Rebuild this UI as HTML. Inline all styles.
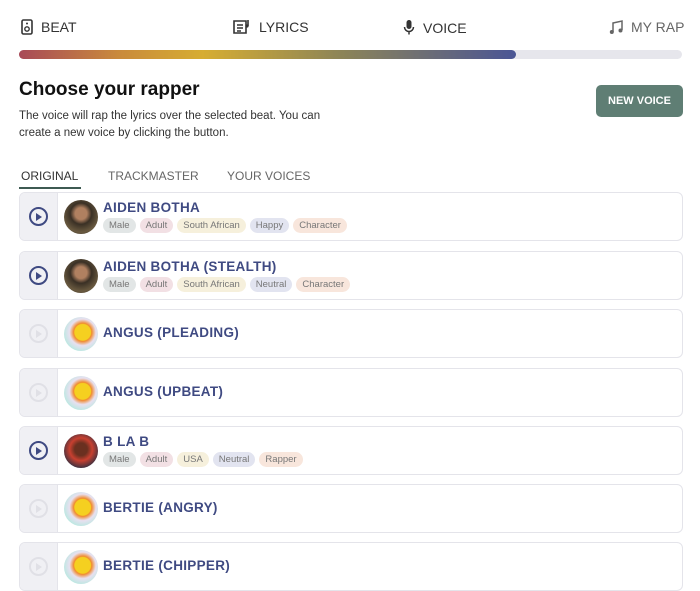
<!DOCTYPE html>
<html><head><style>
body{margin:0;width:700px;height:577px;background:#fff;font-family:"Liberation Sans",sans-serif;overflow:hidden;position:relative}
.nav{position:absolute;top:19px;font-size:14px;color:#333;display:flex;align-items:center;gap:8px}
.bar{position:absolute;left:19px;top:50px;width:663px;height:9px;border-radius:5px;background:#e6e6ec}
.fill{position:absolute;left:0;top:0;height:9px;width:497px;border-radius:5px;background:linear-gradient(90deg,#a84a58,#c98a3c 20%,#d6ad32 37%,#8c8458 65%,#4a5595)}
h1{position:absolute;left:19px;top:79px;margin:0;font-size:19px;font-weight:bold;color:#111}
.desc{position:absolute;left:19px;top:108px;font-size:11.5px;line-height:17px;color:#333;width:335px}
.btn{position:absolute;left:596px;top:85px;width:87px;height:32px;background:#5f7e74;border-radius:5px;color:#fff;font-size:11px;font-weight:bold;text-align:center;line-height:32px}
.tab{position:absolute;top:169px;font-size:12px;color:#666}
.row{position:absolute;left:19px;width:662px;height:47px;border:1px solid #e4e4ea;border-radius:6px;background:#fff;overflow:hidden}
.g{position:absolute;left:0;top:0;width:37px;height:100%;background:#f0f0f4;border-right:1px solid #e4e4ea}
.play{position:absolute;left:9px;top:14px;width:15px;height:15px;border:2px solid #3f4a82;border-radius:50%}
.play:after{content:"";position:absolute;left:5px;top:3.5px;border-left:6px solid #3f4a82;border-top:4px solid transparent;border-bottom:4px solid transparent}
.play.d{border-color:#e0e0e6}.play.d:after{border-left-color:#e0e0e6}
.av{position:absolute;left:44px;top:7px;width:34px;height:34px;border-radius:50%}
.man{background:radial-gradient(circle at 50% 40%,#b08060 0 22%,#3a3025 40%,#6a5a40 70%,#2a2620)}
.duck{background:radial-gradient(circle at 55% 45%,#f5d020 0 30%,#f08a30 34%,#e8e0f0 50%,#b8e8e0 75%,#f0c0d0)}
.bl{background:radial-gradient(circle at 50% 45%,#6a3020 0 25%,#c84030 45%,#3a3040 75%)}
.nm{position:absolute;left:83px;font-size:13.5px;font-weight:bold;color:#3f4a82;letter-spacing:.3px}
.tags{position:absolute;left:83px;top:25px;display:flex;gap:4px}
.t{font-size:9.5px;padding:2px 6px;border-radius:8px;color:#777}
</style></head><body>
<div class="nav" style="left:21px"><svg width="12" height="16" viewBox="0 0 12 16"><rect x="1" y="1" width="10" height="14" rx="1.5" fill="none" stroke="#333" stroke-width="1.6"/><circle cx="6" cy="10" r="2.2" fill="none" stroke="#333" stroke-width="1.4"/><circle cx="6" cy="4.5" r="1" fill="#333"/></svg>BEAT</div>
<div class="nav" style="left:233px"><svg width="18" height="16" viewBox="0 0 18 16"><path d="M1 2h12v12H1z" fill="none" stroke="#333" stroke-width="1.6"/><path d="M4 6h6M4 9h6M4 12h4" stroke="#333" stroke-width="1.4"/><path d="M15 1v6" stroke="#333" stroke-width="1.6"/><circle cx="14" cy="7" r="1.6" fill="#333"/></svg>LYRICS</div>
<div class="nav" style="left:403px"><svg width="12" height="17" viewBox="0 0 12 17"><rect x="3.5" y="1" width="5" height="9" rx="2.5" fill="#333"/><path d="M1.5 8a4.5 4.5 0 009 0M6 12.5v3" stroke="#333" stroke-width="1.5" fill="none"/></svg>VOICE</div>
<div class="nav" style="left:609px;color:#666"><svg width="14" height="15" viewBox="0 0 14 15"><path d="M4 12V3l9-2v9" stroke="#666" stroke-width="1.5" fill="none"/><circle cx="2.8" cy="12" r="2" fill="#666"/><circle cx="11.5" cy="10.5" r="2" fill="#666"/></svg>MY RAP</div>
<div class="bar"><div class="fill"></div></div>
<h1>Choose your rapper</h1>
<div class="desc">The voice will rap the lyrics over the selected beat. You can create a new voice by clicking the button.</div>
<div class="btn">NEW VOICE</div>
<div class="tab" style="left:21px;color:#333">ORIGINAL</div>
<div style="position:absolute;left:19px;top:187px;width:62px;height:2px;background:#3e5a52"></div>
<div class="tab" style="left:108px">TRACKMASTER</div>
<div class="tab" style="left:227px">YOUR VOICES</div>

<div class="row" style="top:192px"><div class="g"><div class="play"></div></div><div class="av man"></div><div class="nm" style="top:7px">AIDEN BOTHA</div>
<div class="tags"><span class="t" style="background:#e2e6e6">Male</span><span class="t" style="background:#f2e0e4">Adult</span><span class="t" style="background:#f6f0dc">South African</span><span class="t" style="background:#e2e4f0">Happy</span><span class="t" style="background:#f8e6dc">Character</span></div></div>
<div class="row" style="top:251px"><div class="g"><div class="play"></div></div><div class="av man"></div><div class="nm" style="top:7px">AIDEN BOTHA (STEALTH)</div>
<div class="tags"><span class="t" style="background:#e2e6e6">Male</span><span class="t" style="background:#f2e0e4">Adult</span><span class="t" style="background:#f6f0dc">South African</span><span class="t" style="background:#e2e4f0">Neutral</span><span class="t" style="background:#f8e6dc">Character</span></div></div>
<div class="row" style="top:309px"><div class="g"><div class="play d"></div></div><div class="av duck"></div><div class="nm" style="top:15px">ANGUS (PLEADING)</div></div>
<div class="row" style="top:368px"><div class="g"><div class="play d"></div></div><div class="av duck"></div><div class="nm" style="top:15px">ANGUS (UPBEAT)</div></div>
<div class="row" style="top:426px"><div class="g"><div class="play"></div></div><div class="av bl"></div><div class="nm" style="top:7px">B LA B</div>
<div class="tags"><span class="t" style="background:#e2e6e6">Male</span><span class="t" style="background:#f2e0e4">Adult</span><span class="t" style="background:#f6f0dc">USA</span><span class="t" style="background:#e2e4f0">Neutral</span><span class="t" style="background:#f8e6dc">Rapper</span></div></div>
<div class="row" style="top:484px"><div class="g"><div class="play d"></div></div><div class="av duck"></div><div class="nm" style="top:15px">BERTIE (ANGRY)</div></div>
<div class="row" style="top:542px"><div class="g"><div class="play d"></div></div><div class="av duck"></div><div class="nm" style="top:15px">BERTIE (CHIPPER)</div></div>
</body></html>
